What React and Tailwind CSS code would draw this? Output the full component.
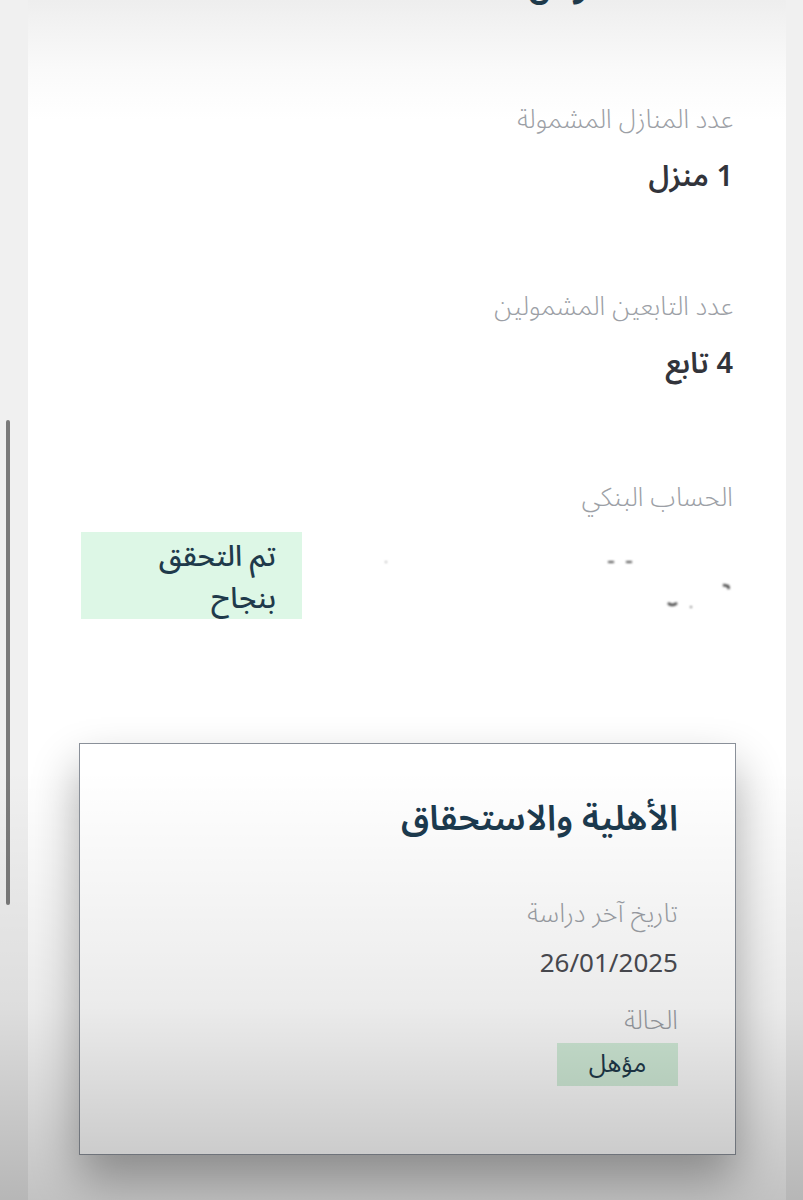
import React from "react";

const font = { fontFamily: '"Noto Sans Arabic", "Noto Naskh Arabic", "DejaVu Sans", "Noto Sans", sans-serif' };

function Field({ label, value, className = "" }) {
  return (
    <div className={className}>
      <p className="text-[26px] leading-[34px] text-[#9c9fa6] font-light">{label}</p>
      <p className="mt-[20px] text-[29px] leading-[40px] font-semibold text-[#32343b]">{value}</p>
    </div>
  );
}

export default function App() {
  return (
    <div dir="rtl" className="relative min-h-[1200px] overflow-hidden bg-[#f0f0f0]" style={font}>
      {/* scrollbar */}
      <div className="absolute left-[6px] top-[420px] h-[485px] w-[4px] rounded-full bg-[#7b7b7b]" />

      <div className="ml-[28px] mr-[17px] min-h-[1200px] bg-[linear-gradient(to_bottom,#eeeeee_0px,#fafafa_70px,#ffffff_120px)] pr-[53px]">
        {/* cut-off heading at the top */}
        <div className="h-[103px] overflow-hidden">
          <p className="-mt-[30px] mr-[128px] text-[30px] leading-[38px] font-bold text-[#1f3a4b]">مؤهل</p>
        </div>

        <Field label="عدد المنازل المشمولة" value="1 منزل" />
        <Field className="mt-[93px]" label="عدد التابعين المشمولين" value="4 تابع" />

        <div className="mt-[97px]">
          <p className="text-[26px] leading-[34px] text-[#9c9fa6] font-light">الحساب البنكي</p>
          <div className="mt-[17px] flex items-start">
            <div className="relative h-[87px] flex-1 blur-[1.2px]">
              <svg width="430" height="90" viewBox="0 0 430 90" className="absolute right-[-30px] top-0">
                <path d="M275 30h6M293 30h6" stroke="#555" strokeWidth="2" />
                <path d="M390 53l5 1 1 3" stroke="#444" strokeWidth="2.5" fill="none" />
                <path d="M335 71q4 4 9 0" stroke="#444" strokeWidth="2.5" fill="none" />
                <path d="M357 75h2" stroke="#888" strokeWidth="2" />
                <path d="M52 30h2" stroke="#bbb" strokeWidth="2" />
              </svg>
            </div>
            <div className="ml-[53px] h-[87px] w-[221px] bg-[#ddf7e6] pr-[26px] pt-[4px] text-[29px] leading-[42px] font-medium text-[#1f3a4b]">
              تم التحقق
              <br />
              بنجاح
            </div>
          </div>
        </div>

        <div className="-mr-[3px] ml-[51px] mt-[124px] h-[412px] border border-[#8a9099] bg-white pr-[57px] pt-[52px] shadow-[0_24px_44px_rgba(0,0,0,0.32)]">
          <h2 className="text-[35px] leading-[46px] font-semibold text-[#1c3a4e]">الأهلية والاستحقاق</h2>
          <p className="mt-[55px] text-[26px] leading-[34px] text-[#9c9fa6] font-light">تاريخ آخر دراسة</p>
          <p className="mt-[16px] text-[26px] leading-[34px] text-[#4b4c52]">26/01/2025</p>
          <p className="mt-[23px] text-[26px] leading-[34px] text-[#9c9fa6] font-light">الحالة</p>
          <div className="mt-[5px] flex h-[43px] w-[121px] items-center justify-center bg-[#d5f0dc] text-[25px] text-[#1f3a4b]">
            مؤهل
          </div>
        </div>
      </div>

      {/* bottom dimming */}
      <div className="pointer-events-none absolute inset-x-0 bottom-0 h-[430px] bg-[linear-gradient(to_bottom,rgba(0,0,0,0)_0%,rgba(0,0,0,0.08)_55%,rgba(0,0,0,0.24)_100%)]" />
    </div>
  );
}
